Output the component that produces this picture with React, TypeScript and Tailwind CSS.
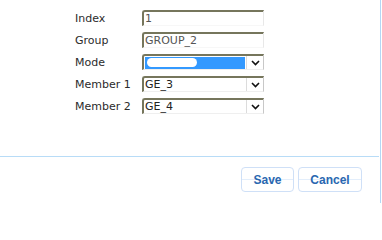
const font = { fontFamily: '"DejaVu Sans", Verdana, sans-serif' };

const Chevron = () => (
  <svg width="9" height="6" viewBox="0 0 9 6" fill="none">
    <path d="M1 1l3.5 3.5L8 1" stroke="#111" strokeWidth="1.6" />
  </svg>
);

const TextBox = ({ value }: { value: string }) => (
  <div className="w-[122px] h-[16px] border-t-2 border-l-2 border-r border-b border-t-[#76765c] border-l-[#76765c] border-r-[#e8e8e8] border-b-[#f7f7f7] rounded-tl-[3px] flex items-center pl-[1px] text-[11px] text-[#555] leading-none">
    {value}
  </div>
);

const SelectBox = ({ value, highlight }: { value?: string; highlight?: boolean }) => (
  <div className="w-[122px] h-[16px] border-t-2 border-l-2 border-r border-b border-t-[#76765c] border-l-[#76765c] border-r-[#c8c8c8] border-b-[#efefef] rounded-tl-[3px] flex items-stretch">
    <div className="flex-1 flex items-center pl-[1px] pr-[1px]">
      {highlight ? (
        <div className="w-full h-[12px] bg-[#3399ff] flex items-center pl-[2px]">
          <div className="w-[50px] h-[9px] rounded-full bg-white blur-[0.5px]" />
        </div>
      ) : (
        <span className="text-[11px] text-[#222] leading-none">{value}</span>
      )}
    </div>
    <div className="w-[17px] border-l border-[#dcdcdc] flex items-center justify-center">
      <Chevron />
    </div>
  </div>
);

const Row = ({ label, children }: { label: string; children: React.ReactNode }) => (
  <div className="flex items-center h-[16px]">
    <div className="w-[67px] text-[11px] text-[#2b2b2b] leading-none">{label}</div>
    {children}
  </div>
);

export default function App() {
  return (
    <div className="w-[381px] h-[203px] bg-white border-r border-[#b3d7f5]" style={font}>
      <div className="h-[157px] border-b border-[#b8dcf7] pl-[75px] pt-[10px] flex flex-col gap-[6px] w-[379px]">
        <Row label="Index">
          <TextBox value="1" />
        </Row>
        <Row label="Group">
          <TextBox value="GROUP_2" />
        </Row>
        <Row label="Mode">
          <SelectBox highlight />
        </Row>
        <Row label="Member 1">
          <SelectBox value="GE_3" />
        </Row>
        <Row label="Member 2">
          <SelectBox value="GE_4" />
        </Row>
      </div>
      <div className="flex justify-end gap-[4px] pr-[18px] pt-[10px]">
        <button
          className="w-[53px] h-[25px] rounded-[4px] border border-[#cfe0f7] bg-[linear-gradient(#ffffff_0%,#ffffff_46%,#e3eefb_50%,#ffffff_54%,#ffffff_100%)] text-[12px] font-bold text-[#2a67b0]"
          style={{ fontFamily: '"Liberation Sans", Arial, sans-serif' }}
        >
          Save
        </button>
        <button
          className="w-[64px] h-[25px] rounded-[4px] border border-[#cfe0f7] bg-[linear-gradient(#ffffff_0%,#ffffff_46%,#e3eefb_50%,#ffffff_54%,#ffffff_100%)] text-[12px] font-bold text-[#2a67b0]"
          style={{ fontFamily: '"Liberation Sans", Arial, sans-serif' }}
        >
          Cancel
        </button>
      </div>
    </div>
  );
}
